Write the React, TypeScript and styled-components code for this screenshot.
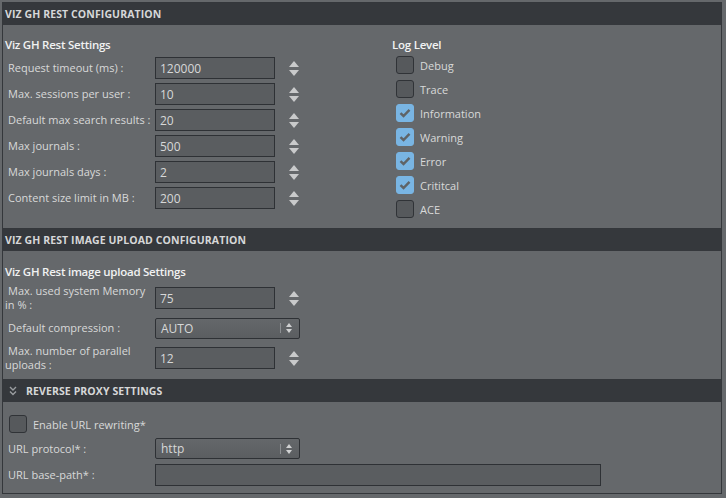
import React from "react";
import styled, { createGlobalStyle, css } from "styled-components";

const GlobalStyle = createGlobalStyle`
  body {
    margin: 0;
    background: #65686b;
    font-family: "Open Sans", "Liberation Sans", sans-serif;
  }
`;

const Page = styled.div`
  width: 720px;
  padding: 2px 0 0 2px;
`;

const Section = styled.section`
  border: 1px solid #34373b;
  & + & {
    border-top: none;
  }
`;

const Header = styled.div`
  height: 22px;
  display: flex;
  align-items: center;
  gap: 9px;
  padding-left: 2px;
  background: #35383c;
  color: #d6d7d8;
  font-size: 10.5px;
  font-weight: 700;
  letter-spacing: 0.1px;
  text-transform: uppercase;
`;

const Body = styled.div<{ $height: number; $top: number }>`
  box-sizing: border-box;
  height: ${(p) => p.$height}px;
  padding: ${(p) => p.$top}px 0 0 2px;
  display: flex;
`;

const Column = styled.div<{ $width?: number }>`
  display: flex;
  flex-direction: column;
  ${(p) =>
    p.$width &&
    css`
      width: ${p.$width}px;
    `}
`;

const Title = styled.div`
  font-size: 11.5px;
  font-weight: 600;
  line-height: 16px;
  letter-spacing: -0.25px;
  color: #f1f2f2;
  margin-bottom: 4px;
`;

const Rows = styled.div<{ $gap: number }>`
  display: flex;
  flex-direction: column;
  gap: ${(p) => p.$gap}px;
`;

const Row = styled.div<{ $min?: number }>`
  display: flex;
  align-items: center;
  min-height: ${(p) => p.$min ?? 22}px;
`;

const Label = styled.div`
  width: 150px;
  text-indent: 3px;
  font-size: 11px;
  line-height: 14px;
  color: #d8d9d9;
`;

const Input = styled.div<{ $width?: number }>`
  box-sizing: border-box;
  width: ${(p) => p.$width ?? 120}px;
  height: 22px;
  padding-left: 4px;
  display: flex;
  align-items: center;
  background: #5a5d60;
  border: 1px solid #2e3135;
  color: #d7d8d8;
  font-size: 12px;
`;

const Spinner = styled.div`
  margin-left: 14px;
  display: flex;
  flex-direction: column;
  gap: 3px;
`;

const Arrow = styled.span<{ $down?: boolean }>`
  width: 0;
  height: 0;
  border-left: 5px solid transparent;
  border-right: 5px solid transparent;
  ${(p) =>
    p.$down
      ? css`
          border-top: 6px solid #c9cacb;
        `
      : css`
          border-bottom: 6px solid #c9cacb;
        `}
`;

const Select = styled.div`
  box-sizing: border-box;
  width: 145px;
  height: 21px;
  padding-left: 5px;
  display: flex;
  align-items: center;
  background: linear-gradient(#64676a, #5b5e61);
  border: 1px solid #2e3135;
  border-radius: 2px;
  color: #d7d8d8;
  font-size: 12px;
`;

const SelectText = styled.span`
  flex: 1;
`;

const SelectDivider = styled.span`
  width: 1px;
  height: 10px;
  background: #8c8f92;
  margin-right: 5px;
`;

const SelectArrows = styled.span`
  display: flex;
  flex-direction: column;
  gap: 2px;
  margin-right: 7px;
`;

const SmallArrow = styled.span<{ $down?: boolean }>`
  width: 0;
  height: 0;
  border-left: 3px solid transparent;
  border-right: 3px solid transparent;
  ${(p) =>
    p.$down
      ? css`
          border-top: 4px solid #d0d1d2;
        `
      : css`
          border-bottom: 4px solid #d0d1d2;
        `}
`;

const CheckList = styled.div`
  display: flex;
  flex-direction: column;
  margin: -4px 0 0 4px;
`;

const CheckRow = styled.div<{ $height?: number }>`
  display: flex;
  align-items: center;
  gap: 6px;
  height: ${(p) => p.$height ?? 24}px;
  font-size: 11px;
  color: #d8d9d9;
`;

const Box = styled.span<{ $checked?: boolean }>`
  box-sizing: border-box;
  width: 18px;
  height: 18px;
  border-radius: 3px;
  display: flex;
  align-items: center;
  justify-content: center;
  ${(p) =>
    p.$checked
      ? css`
          background: #79b5e3;
          border: 1px solid #79b5e3;
        `
      : css`
          background: #56595c;
          border: 1px solid #303337;
        `}
`;

const Stack = styled.div`
  display: flex;
  flex-direction: column;
  gap: 5px;
  padding-left: 4px;
`;

const PlainRow = styled.div`
  display: flex;
  align-items: center;
  margin-left: -4px;
`;

const Chevrons = styled.svg`
  margin-left: 4px;
`;

function Check({ checked, label }: { checked?: boolean; label: string }) {
  return (
    <CheckRow>
      <Box $checked={checked}>
        {checked && (
          <svg width="12" height="10" viewBox="0 0 12 10">
            <path d="M1.5 5.2 L4.5 8 L10.5 1.8" fill="none" stroke="#5f6366" strokeWidth="2.4" />
          </svg>
        )}
      </Box>
      {label}
    </CheckRow>
  );
}

function NumberField({ label, value }: { label: string; value: string }) {
  return (
    <Row $min={22}>
      <Label>{label}</Label>
      <Input>{value}</Input>
      <Spinner>
        <Arrow />
        <Arrow $down />
      </Spinner>
    </Row>
  );
}

function Dropdown({ value }: { value: string }) {
  return (
    <Select>
      <SelectText>{value}</SelectText>
      <SelectDivider />
      <SelectArrows>
        <SmallArrow />
        <SmallArrow $down />
      </SelectArrows>
    </Select>
  );
}

const restFields = [
  ["Request timeout (ms) :", "120000"],
  ["Max. sessions per user :", "10"],
  ["Default max search results :", "20"],
  ["Max journals :", "500"],
  ["Max journals days :", "2"],
  ["Content size limit in MB :", "200"],
];

const logLevels: [string, boolean][] = [
  ["Debug", false],
  ["Trace", false],
  ["Information", true],
  ["Warning", true],
  ["Error", true],
  ["Crititcal", true],
  ["ACE", false],
];

export default function App() {
  return (
    <>
      <GlobalStyle />
      <Page>
        <Section>
          <Header>Viz GH Rest Configuration</Header>
          <Body $height={203} $top={12}>
            <Column $width={387}>
              <Title>Viz GH Rest Settings</Title>
              <Rows $gap={4}>
                {restFields.map(([l, v]) => (
                  <NumberField key={l} label={l} value={v} />
                ))}
              </Rows>
            </Column>
            <Column>
              <Title>Log Level</Title>
              <CheckList>
                {logLevels.map(([l, c]) => (
                  <Check key={l} label={l} checked={c} />
                ))}
              </CheckList>
            </Column>
          </Body>
        </Section>

        <Section>
          <Header>Viz GH Rest Image Upload Configuration</Header>
          <Body $height={128} $top={13}>
            <Column>
              <Title>Viz GH Rest image upload Settings</Title>
              <Rows $gap={2}>
                <Row $min={28}>
                  <Label>Max. used system Memory in % :</Label>
                  <Input>75</Input>
                  <Spinner>
                    <Arrow />
                    <Arrow $down />
                  </Spinner>
                </Row>
                <Row $min={28}>
                  <Label>Default compression :</Label>
                  <Dropdown value="AUTO" />
                </Row>
                <Row $min={28}>
                  <Label>Max. number of parallel uploads :</Label>
                  <Input>12</Input>
                  <Spinner>
                    <Arrow />
                    <Arrow $down />
                  </Spinner>
                </Row>
              </Rows>
            </Column>
          </Body>
        </Section>

        <Section>
          <Header>
            <Chevrons width="8" height="10" viewBox="0 0 8 10">
              <path d="M1 1 L4 4 L7 1 M1 5.5 L4 8.5 L7 5.5" fill="none" stroke="#9a9da0" strokeWidth="1.4" />
            </Chevrons>
            Reverse Proxy Settings
          </Header>
          <Body $height={91} $top={13}>
            <Stack>
              <CheckRow $height={18}>
                <Box />
                Enable URL rewriting*
              </CheckRow>
              <PlainRow>
                <Label>URL protocol* :</Label>
                <Dropdown value="http" />
              </PlainRow>
              <PlainRow>
                <Label>URL base-path* :</Label>
                <Input $width={446} />
              </PlainRow>
            </Stack>
          </Body>
        </Section>
      </Page>
    </>
  );
}
